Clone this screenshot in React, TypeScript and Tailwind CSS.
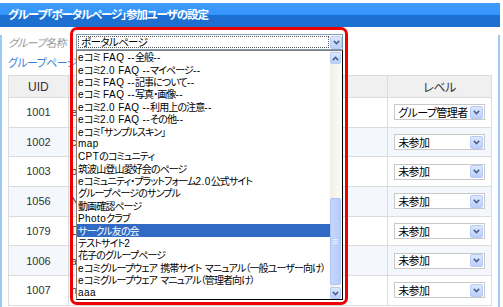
const items = [
  'eコミ FAQ --全般--',
  'eコミ2.0 FAQ --マイページ--',
  'eコミ FAQ --記事について--',
  'eコミ FAQ --写真・画像--',
  'eコミ2.0 FAQ --利用上の注意--',
  'eコミ2.0 FAQ --その他--',
  'eコミ「サンプルスキン」',
  'map',
  'CPTのコミュニティ',
  '筑波山登山愛好会のページ',
  'eコミュニティ・プラットフォーム2.0公式サイト',
  'グループページのサンプル',
  '動画確認ページ',
  'Photoクラブ',
  'サークル友の会',
  'テストサイト2',
  '花子のグループページ',
  'eコミグループウェア 携帯サイト マニュアル（一般ユーザー向け）',
  'eコミグループウェア マニュアル（管理者向け）',
  'aaa',
];

const rows = [
  { uid: '1001', name: 'e', level: 'グループ管理者' },
  { uid: '1002', name: 'c', level: '未参加' },
  { uid: '1003', name: 'b', level: '未参加' },
  { uid: '1056', name: 'N', level: '未参加' },
  { uid: '1079', name: '口', level: '未参加' },
  { uid: '1006', name: 'a', level: '未参加' },
  { uid: '1007', name: 'n', level: '未参加' },
];

// 英数字と和文でフォントと字間を分ける
const Mixed = ({ text }: { text: string }) => (
  <>
    {text.split(/([\x20-\x7e]+)/).map((part, i) =>
      part === '' ? null : /^[\x20-\x7e]+$/.test(part) ? (
        <span key={i} className="whitespace-pre font-['Liberation_Sans',sans-serif] leading-none tracking-[0.4px]">
          {part}
        </span>
      ) : (
        <span key={i} className="leading-none">
          {part}
        </span>
      ),
    )}
  </>
);

const Chevron = ({ up = false }: { up?: boolean }) => (
  <svg width="7" height="5" viewBox="0 0 7 5" className={up ? 'rotate-180' : ''}>
    <path d="M0.8 0.9 L3.5 3.6 L6.2 0.9" fill="none" stroke="#4d6185" strokeWidth="1.5" />
  </svg>
);

const ArrowBox = ({ up = false, className = '' }: { up?: boolean; className?: string }) => (
  <div
    className={`flex shrink-0 items-center justify-center rounded-[2px] border border-[#b7caf5] bg-[linear-gradient(to_bottom,#dde8fe,#b9cffb)] ${className}`}
  >
    <Chevron up={up} />
  </div>
);

const LevelSelect = ({ value }: { value: string }) => (
  <div className="flex h-[16px] w-[91px] items-center border border-[#c8c8c8] bg-white pl-[3px]">
    <span className="flex-1 whitespace-nowrap text-[11px] leading-none tracking-[-0.6px] text-black">{value}</span>
    <ArrowBox className="mr-[1px] h-[13px] w-[13px]" />
  </div>
);

export default function App() {
  return (
    <div className="relative h-[307px] w-[503px] overflow-hidden bg-white font-['Noto_Sans_CJK_JP',sans-serif] [font-feature-settings:'palt']">
      {/* パネル */}
      <div className="w-[500px] pt-[3px]">
        <div className="flex h-[24px] items-center bg-[linear-gradient(to_bottom,#3f9dff_0%,#3394fb_48%,#1c6fd2_52%,#1e70cf_100%)] pl-[8px] text-[11.5px] font-bold tracking-[-1.1px] text-white">
          グループ「ポータルページ」参加ユーザの設定
        </div>
        <div className="h-[290px] border-x-2 border-[#9ccaf3] px-[6px]">
          {/* グループ名称 */}
          <div className="mt-[8px] flex h-[14px] items-center">
            <span className="w-[68px] text-[11px] italic tracking-[-0.8px] text-[#999]">グループ名称</span>
          </div>
          {/* リンク */}
          <div className="mt-[6px] h-[14px] text-[11px] leading-[14px] tracking-[-0.6px] text-[#3a7fdc]">グループページ</div>

          {/* テーブル */}
          <div className="mt-[6px] border-l border-t border-[#dcdcdc] font-['Liberation_Sans','Noto_Sans_CJK_JP',sans-serif] text-[11px] text-[#333]">
            <div className="flex h-[22px] bg-[#f0f0f0]">
              <div className="flex w-[60px] items-center justify-center border-b border-r border-[#dcdcdc] text-[12px]">UID</div>
              <div className="w-[320px] border-b border-r border-[#dcdcdc]" />
              <div className="flex w-[104px] items-center justify-center border-b border-r border-[#dcdcdc] font-['Noto_Sans_CJK_JP',sans-serif] text-[12px] tracking-[-0.5px]">
                レベル
              </div>
            </div>
            {rows.map((r, i) => (
              <div key={r.uid} className={`flex h-[29.7px] ${i % 2 === 1 ? 'bg-[#f4f8fc]' : 'bg-white'}`}>
                <div className="flex w-[60px] items-center justify-center border-b border-r border-[#dcdcdc]">{r.uid}</div>
                <div className="flex w-[320px] items-center border-b border-r border-[#dcdcdc] pl-[2px]">{r.name}</div>
                <div className="flex w-[104px] items-center border-b border-r border-[#dcdcdc] pl-[6px] font-['Noto_Sans_CJK_JP',sans-serif]">
                  <LevelSelect value={r.level} />
                </div>
              </div>
            ))}
          </div>
        </div>
      </div>

      {/* 開いたセレクト */}
      <div className="absolute left-[76px] top-[34px] flex h-[16px] w-[267px] items-center border border-[#7f9db9] bg-white">
        <div className="m-[1px] flex h-[12px] flex-1 items-center border border-dotted border-[#555] pl-[2px] text-[10.5px] leading-none tracking-[-0.6px] text-black">
          ポータルページ
        </div>
        <ArrowBox className="h-[13px] w-[12px]" />
      </div>

      {/* ドロップダウンリスト */}
      <div className="absolute left-[76px] top-[50px] flex h-[250px] w-[267px] border border-b-black border-l-[#7f7f7f] border-r-black border-t-[#7f7f7f] bg-white">
        <div className="flex-1">
          {items.map((t, i) => (
            <div
              key={t}
              className={`flex h-[12.4px] items-baseline whitespace-nowrap pl-[1px] pt-[1.2px] text-[10px] tracking-[-0.9px] ${
                i === 14 ? 'bg-[#316ac5] text-white' : 'text-black'
              }`}
            >
              <Mixed text={t} />
            </div>
          ))}
        </div>
        {/* スクロールバー */}
        <div className="flex w-[12px] flex-col bg-[linear-gradient(to_right,#f1efe6,#fcfcf8)]">
          <ArrowBox up className="mt-[1px] h-[12px] w-[11px]" />
          <div className="h-[134px]" />
          <div className="flex h-[87px] w-[11px] items-center justify-center rounded-[2px] border border-[#aec3f3] bg-[linear-gradient(to_right,#c6d6fb,#b8cdf9)]">
            <div className="flex flex-col gap-[1px]">
              <div className="h-px w-[5px] bg-[#e6eefe]" />
              <div className="h-px w-[5px] bg-[#e6eefe]" />
              <div className="h-px w-[5px] bg-[#e6eefe]" />
            </div>
          </div>
          <ArrowBox className="mt-auto h-[12px] w-[11px]" />
        </div>
      </div>

      {/* 赤枠 */}
      <div className="pointer-events-none absolute left-[70px] top-[27px] h-[278px] w-[278px] rounded-[7px] border-[3px] border-[#ee0000]" />
    </div>
  );
}
